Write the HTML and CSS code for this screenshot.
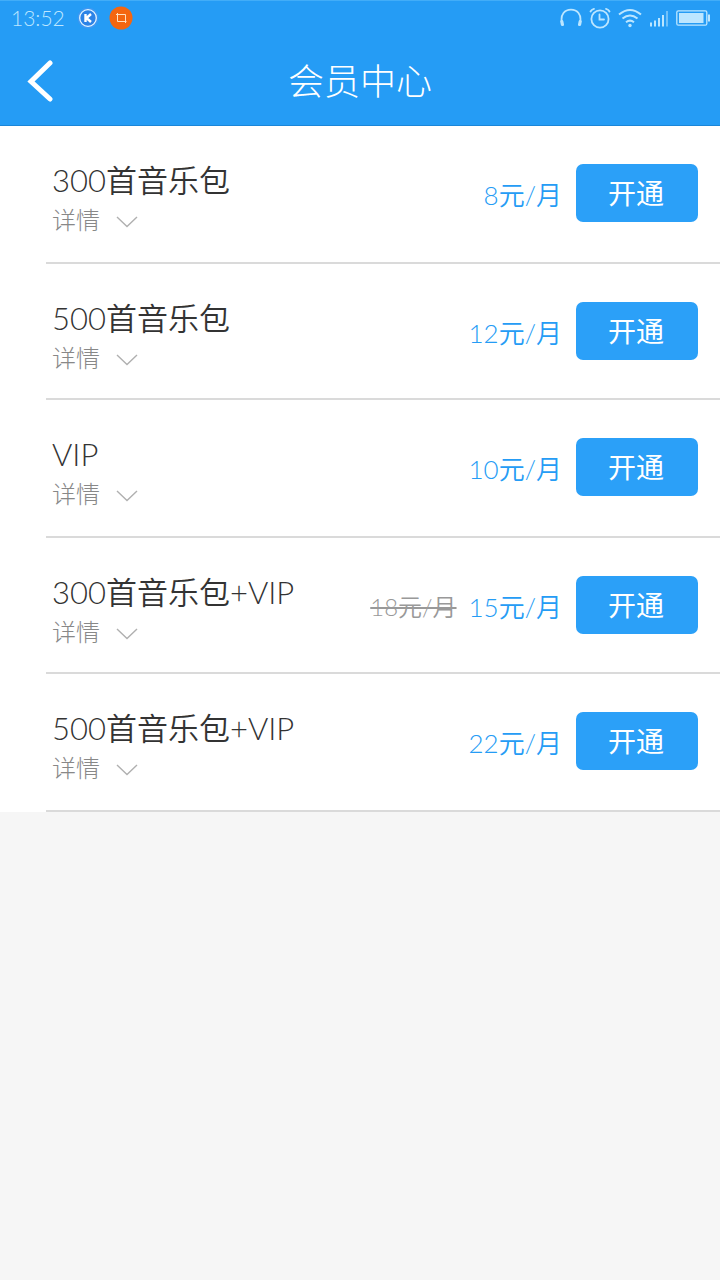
FILE: index.html
```html
<!DOCTYPE html>
<html lang="zh-CN">
<head>
<meta charset="utf-8">
<meta name="viewport" content="width=device-width, initial-scale=1">
<title>会员中心</title>
<link rel="stylesheet" href="styles.css">
</head>
<body>
<header class="top">
  <div class="status">
    <span class="clock">13:52</span>
    <svg width="22" height="22" viewBox="0 0 22 22" aria-hidden="true">
      <circle cx="11" cy="11" r="10.500" fill="#3d98f2"/>
      <circle cx="11" cy="11" r="8.300" fill="#2c83e6" stroke="#e4f4ff" stroke-width="1.300"/>
      <path d="M8.500 7v8M14 7l-4.500 4 4.500 4" fill="none" stroke="#fff" stroke-width="2.400"/>
    </svg>
    <svg width="24" height="24" viewBox="0 0 24 24" aria-hidden="true">
      <circle cx="12" cy="12" r="11.500" fill="#f46610"/>
      <path d="M7 8.500h9.500v8.500M8.500 7v8.500H17.500" fill="none" stroke="#ffe0c0" stroke-width="1"/>
    </svg>
    <div class="system">
      <svg width="22" height="20" viewBox="0 0 22 20" fill="none" stroke="#bce6ff" aria-hidden="true">
        <path d="M2 15C0 6 5 1.700 11 1.700S22 6 20 15" stroke-width="1.800"/>
        <path d="M1.800 13.500l.6 3M20.200 13.500l-.6 3" stroke-width="3.200" stroke-linecap="round"/>
      </svg>
      <svg width="22" height="22" viewBox="0 0 22 22" fill="none" stroke="#bce6ff" stroke-width="1.800" stroke-linecap="round" aria-hidden="true">
        <circle cx="11" cy="12" r="8.600"/>
        <path d="M10.500 7.500V12.500H15M1.500 4.500Q2.500 2.500 5 1.800M20.500 4.500Q19.500 2.500 17 1.800"/>
      </svg>
      <svg width="24" height="20" viewBox="0 0 24 20" fill="none" stroke="#bce6ff" stroke-width="2" aria-hidden="true">
        <path d="M1 6.500Q12-2.500 23 6.500M4.500 10.500Q12 4.500 19.500 10.500M8 14.200Q12 11 16 14.200"/>
        <circle cx="12" cy="17.500" r="1.700" fill="#bce6ff" stroke="none"/>
      </svg>
      <svg width="20" height="18" viewBox="0 0 20 18" stroke="#bce6ff" stroke-width="2" aria-hidden="true">
        <path d="M2 17.500v-4M6 17.500v-6M10 17.500V9M14 17.500V6"/>
        <path d="M18 17.500V2" opacity=".5"/>
      </svg>
      <svg width="34" height="16" viewBox="0 0 34 16" fill="none" aria-hidden="true">
        <rect x=".8" y=".8" width="30" height="14.400" rx="1.500" stroke="#bce6ff" stroke-width="1.300"/>
        <rect x="3" y="3" width="24.500" height="10" fill="#bce6ff"/>
        <path d="M33 4.500v7" stroke="#bce6ff" stroke-width="2"/>
      </svg>
    </div>
  </div>
  <div class="bar">
    <button class="back" type="button" aria-label="返回">
      <svg width="26" height="42" viewBox="0 0 26 42" aria-hidden="true"><path d="M23 3L4 21.500 23 39" fill="none" stroke="#fff" stroke-width="5" stroke-linecap="round"/></svg>
    </button>
    <h1 class="heading">会员中心</h1>
  </div>
</header>
<main>
  <ul class="plans">
    <li class="plan">
      <div class="info">
        <h2 class="name">300首音乐包</h2>
        <button class="details" type="button">详情 <svg class="chevron" width="22" height="12" viewBox="0 0 22 12" aria-hidden="true"><path d="M1 1l10 9.500L21 1"/></svg></button>
      </div>
      <span class="price">8元/月</span>
      <button class="open" type="button">开通</button>
    </li>
    <li class="plan">
      <div class="info">
        <h2 class="name">500首音乐包</h2>
        <button class="details" type="button">详情 <svg class="chevron" width="22" height="12" viewBox="0 0 22 12" aria-hidden="true"><path d="M1 1l10 9.500L21 1"/></svg></button>
      </div>
      <span class="price">12元/月</span>
      <button class="open" type="button">开通</button>
    </li>
    <li class="plan">
      <div class="info">
        <h2 class="name">VIP</h2>
        <button class="details" type="button">详情 <svg class="chevron" width="22" height="12" viewBox="0 0 22 12" aria-hidden="true"><path d="M1 1l10 9.500L21 1"/></svg></button>
      </div>
      <span class="price">10元/月</span>
      <button class="open" type="button">开通</button>
    </li>
    <li class="plan">
      <div class="info">
        <h2 class="name">300首音乐包+VIP</h2>
        <button class="details" type="button">详情 <svg class="chevron" width="22" height="12" viewBox="0 0 22 12" aria-hidden="true"><path d="M1 1l10 9.500L21 1"/></svg></button>
      </div>
      <del class="old-price">18元/月</del>
      <span class="price">15元/月</span>
      <button class="open" type="button">开通</button>
    </li>
    <li class="plan">
      <div class="info">
        <h2 class="name">500首音乐包+VIP</h2>
        <button class="details" type="button">详情 <svg class="chevron" width="22" height="12" viewBox="0 0 22 12" aria-hidden="true"><path d="M1 1l10 9.500L21 1"/></svg></button>
      </div>
      <span class="price">22元/月</span>
      <button class="open" type="button">开通</button>
    </li>
  </ul>
</main>
</body>
</html>
```

FILE: styles.css
```css
* {
  box-sizing: border-box;
}

body {
  margin: 0;
  min-height: 100vh;
  background: #f6f6f6;
  color: #333;
  font-family: Lato, "Noto Sans CJK SC", sans-serif;
  font-weight: 350;
}

button {
  margin: 0;
  padding: 0;
  border: 0;
  background: none;
  color: inherit;
  font: inherit;
  cursor: pointer;
}

svg {
  display: block;
  flex: none;
}

.top {
  background: #259cf5;
  border-top: 1px solid #42adf8;
  border-bottom: 1px solid #1b86d8;
  color: #fff;
}

.status {
  display: flex;
  align-items: center;
  gap: 10px;
  height: 34px;
  padding: 0 10px 0 11px;
}

.clock {
  margin-right: 2px;
  color: #bce6ff;
  font-size: 21px;
  line-height: 32px;
}

.system {
  display: flex;
  align-items: center;
  gap: 7px;
  margin-left: auto;
}

.bar {
  display: grid;
  grid-template-columns: 80px 1fr 80px;
  align-items: center;
  height: 90px;
  padding-top: 2px;
}

.back {
  display: flex;
  align-items: center;
  height: 60px;
  padding-left: 27px;
}

.heading {
  margin: 0;
  text-align: center;
  font-size: 36px;
  font-weight: 300;
  line-height: 52px;
}

.plans {
  margin: 0;
  padding: 0 0 0 46px;
  list-style: none;
  background: #fff;
}

.plan {
  display: flex;
  align-items: flex-start;
  min-height: 138px;
  padding: 34px 22px 0 6px;
  border-bottom: 2px solid #dadada;
}

.plan:nth-child(even) {
  min-height: 136px;
}

.info {
  flex: 1;
}

.name {
  margin: 0;
  font-size: 31px;
  font-weight: inherit;
  line-height: 40px;
}

.details {
  display: flex;
  align-items: center;
  gap: 16px;
  color: #888;
  font-size: 24px;
  font-weight: 300;
  line-height: 40px;
}

.chevron {
  margin-top: 4px;
  fill: none;
  stroke: #b0b0b0;
  stroke-width: 1.4;
}

.price,
.old-price {
  margin-top: 4px;
  line-height: 62px;
}

.price {
  color: #259cf5;
  font-size: 26px;
}

.old-price {
  margin-right: 12px;
  color: #999;
  font-size: 24px;
}

.open {
  width: 122px;
  height: 58px;
  margin: 4px 0 0 14px;
  padding: 0 2px 2px 0;
  border-radius: 7px;
  background: #2ba0f8;
  color: #fff;
  font-size: 28px;
  font-weight: 400;
}
```
